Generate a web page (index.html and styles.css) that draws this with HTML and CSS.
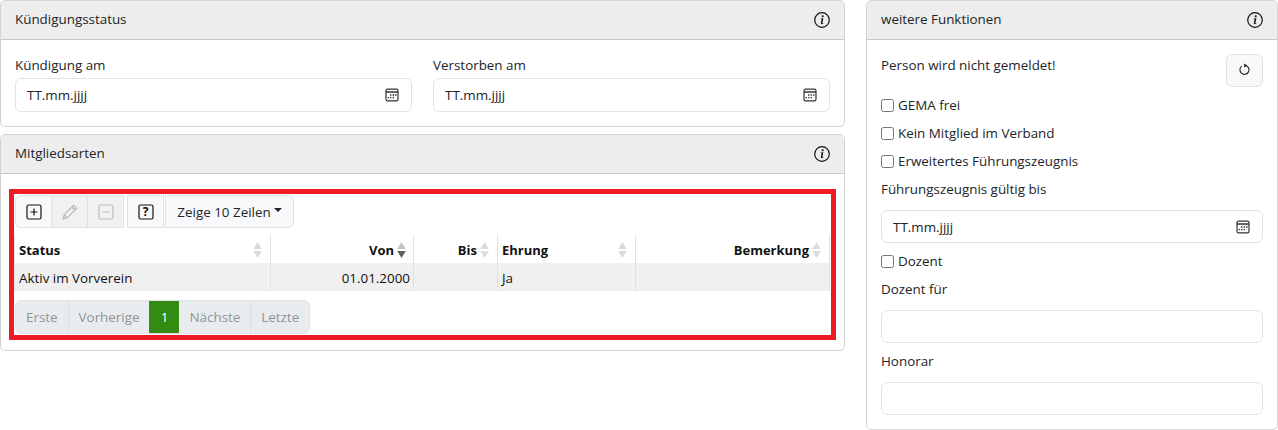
FILE: index.html
```html
<!DOCTYPE html>
<html lang="de">
<head>
<meta charset="utf-8">
<title>Mitglied</title>
<link rel="stylesheet" href="styles.css">
</head>
<body>
<svg class="defs" width="0" height="0" aria-hidden="true">
  <symbol id="info" viewBox="0 0 16 16"><circle cx="8" cy="8" r="7.3" fill="none" stroke="currentColor" stroke-width="1.2"/><path d="M9.4 6.3 6.9 6.6l-.1.5.5.1c.3 0 .4.1.3.4l-.7 3.2c-.2.9.1 1.4.9 1.4.6 0 1.2-.3 1.6-.6l.1-.5c-.2.2-.6.3-.8.3-.3 0-.4-.2-.3-.5z" fill="currentColor"/><circle cx="8.7" cy="4.2" r="1.05" fill="currentColor"/></symbol>
  <symbol id="cal" viewBox="0 0 14 14"><rect x="1" y="1.2" width="12" height="11.6" rx="1.6" fill="none" stroke="currentColor" stroke-width="1.2"/><path d="M1 4h12" stroke="currentColor" stroke-width="1.6"/><path d="M5 6.3h1.4v1.4H5zM7.6 6.3H9v1.4H7.6zM10.1 6.3h1.4v1.4h-1.4zM2.6 8.9H4v1.4H2.6zM5 8.9h1.4v1.4H5zM7.6 8.9H9v1.4H7.6z" fill="currentColor"/></symbol>
  <symbol id="sort" viewBox="0 0 9 16"><path d="M4.5 0l4.3 7h-8.600z" fill="#dcdcdc"/><path d="M4.500 16L.2 9h8.600z" fill="#dcdcdc"/></symbol>
  <symbol id="sortdown" viewBox="0 0 9 16"><path d="M4.5 0l4.3 7h-8.600z" fill="#c4c4c4"/><path d="M4.500 16L.2 9h8.600z" fill="#5f5f5f"/></symbol>
</svg>
<main class="page">
  <div class="left">
    <section class="card">
      <header class="card-head"><span>Kündigungsstatus</span><svg class="info"><use href="#info"/></svg></header>
      <div class="card-body status-grid">
        <div class="field">
          <label class="label">Kündigung am</label>
          <div class="input date"><span>TT.mm.jjjj</span><svg class="cal"><use href="#cal"/></svg></div>
        </div>
        <div class="field">
          <label class="label">Verstorben am</label>
          <div class="input date"><span>TT.mm.jjjj</span><svg class="cal"><use href="#cal"/></svg></div>
        </div>
      </div>
    </section>
    <section class="card">
      <header class="card-head"><span>Mitgliedsarten</span><svg class="info"><use href="#info"/></svg></header>
      <div class="card-body types-body">
        <div class="marked">
          <div class="toolbar">
            <div class="btn-group">
              <button class="tbtn">
                <svg width="16" height="16" viewBox="0 0 16 16"><rect x="1" y="1" width="14" height="14" rx="1.5" fill="none" stroke="#111" stroke-width="1.2"/><path d="M8 4.5v7M4.5 8h7" stroke="#111" stroke-width="1.2"/></svg>
              </button>
              <button class="tbtn off">
                <svg width="16" height="16" viewBox="0 0 16 16"><path d="M11.6 1.400l3 3-9.400 9.400-4 1 1-4z M10 3l3 3 M2.200 10.800l3 3" fill="none" stroke="#b4b4b4" stroke-width="1.100"/></svg>
              </button>
              <button class="tbtn off">
                <svg width="16" height="16" viewBox="0 0 16 16"><rect x="1" y="1" width="14" height="14" rx="1.5" fill="none" stroke="#bdbdbd" stroke-width="1.2"/><path d="M4.5 8h7" stroke="#bdbdbd" stroke-width="1.2"/></svg>
              </button>
            </div>
            <button class="tbtn solo">
              <svg width="16" height="16" viewBox="0 0 16 16"><rect x="1" y="1" width="14" height="14" rx="1.5" fill="none" stroke="#111" stroke-width="1.2"/></svg>
              <span class="q">?</span>
            </button>
            <button class="tbtn rows">Zeige 10 Zeilen<i class="caret"></i></button>
          </div>
          <table class="grid">
            <colgroup><col class="c1"><col class="c2"><col class="c3"><col class="c4"><col class="c5"></colgroup>
            <thead>
              <tr>
                <th><div class="th"><span>Status</span><svg class="sort"><use href="#sort"/></svg></div></th>
                <th class="r"><div class="th tight"><span>Von</span><svg class="sort"><use href="#sortdown"/></svg></div></th>
                <th class="r"><div class="th"><span>Bis</span><svg class="sort"><use href="#sort"/></svg></div></th>
                <th><div class="th"><span>Ehrung</span><svg class="sort"><use href="#sort"/></svg></div></th>
                <th class="r"><div class="th"><span>Bemerkung</span><svg class="sort"><use href="#sort"/></svg></div></th>
              </tr>
            </thead>
            <tbody>
              <tr><td>Aktiv im Vorverein</td><td class="r">01.01.2000</td><td class="r"></td><td>Ja</td><td class="r"></td></tr>
            </tbody>
          </table>
          <nav class="pager">
            <span class="pg">Erste</span><span class="pg">Vorherige</span><span class="pg on">1</span><span class="pg">Nächste</span><span class="pg">Letzte</span>
          </nav>
        </div>
      </div>
    </section>
  </div>
  <aside class="right">
    <section class="card full">
      <header class="card-head"><span>weitere Funktionen</span><svg class="info"><use href="#info"/></svg></header>
      <div class="card-body side">
        <div class="notice">
          <span>Person wird nicht gemeldet!</span>
          <button class="refresh">
            <svg width="13" height="13" viewBox="0 0 14 14"><path d="M8.600 2.700A4.900 4.900 0 1 1 4 3.400" fill="none" stroke="#222" stroke-width="1.200"/><path d="M6.600 0.600v4.200L10 2.700z" fill="#222"/></svg>
          </button>
        </div>
        <label class="check"><input type="checkbox">GEMA frei</label>
        <label class="check"><input type="checkbox">Kein Mitglied im Verband</label>
        <label class="check"><input type="checkbox">Erweitertes Führungszeugnis</label>
        <label class="label tall">Führungszeugnis gültig bis</label>
        <div class="input date slim"><span>TT.mm.jjjj</span><svg class="cal"><use href="#cal"/></svg></div>
        <label class="check after">
          <input type="checkbox">Dozent</label>
        <label class="label tall">Dozent für</label>
        <div class="input slim"></div>
        <label class="label tall gap">Honorar</label>
        <div class="input slim"></div>
      </div>
    </section>
  </aside>
</main>
</body>
</html>
```
FILE: styles.css
```css
* { box-sizing: border-box; }
html, body { margin: 0; padding: 0; background: #fff; }
body {
  font-family: "Open Sans", "Noto Sans", "Liberation Sans", sans-serif;
  font-size: 13.4px;
  color: #212529;
  height: 430px;
  overflow: hidden;
}
.defs { position: absolute; }
.page { display: flex; gap: 21px; align-items: flex-start; }
.left { width: 845px; display: flex; flex-direction: column; gap: 7px; }
.right { width: 412px; height: 430px; }
.card { border: 1px solid #d4d4d4; border-radius: 5px; background: #fff; overflow: hidden; }
.card.full { height: 430px; }
.card-head {
  height: 39px;
  background: #ededed;
  border-bottom: 1px solid #c9c9c9;
  display: flex;
  justify-content: space-between;
  align-items: center;
  padding: 0 14px;
}
.card-head span { margin-bottom: 2px; }
.info { width: 16px; height: 16px; color: #111; }
.card-body { padding: 14px; }
.status-grid { display: flex; gap: 21px; height: 86px; padding-top: 14px; }
.field { flex: 1; display: flex; flex-direction: column; }
.label { display: block; height: 24px; line-height: 22px; }
.input {
  height: 34px;
  border: 1px solid #dfe2e6;
  border-radius: 6px;
  background: #fff;
  padding: 0 11px;
}
.input.slim { height: 33px; }
.date { display: flex; justify-content: space-between; align-items: center; }
.cal { width: 14px; height: 14px; color: #333; margin-right: 1px; }
.types-body { padding: 15px 8px 9px; height: 176px; }
.marked {
  border: 5px solid #ed1c24;
  height: 151px;
  padding-top: 1px;
  padding-left: 1px;
}
.toolbar { display: flex; gap: 3px; height: 33px; }
.btn-group { display: flex; }
.tbtn {
  font: inherit;
  color: #212529;
  height: 33px;
  background: #f8f9fa;
  border: 1px solid #dee2e6;
  padding: 0;
  display: flex;
  align-items: center;
  justify-content: center;
  position: relative;
}
.btn-group .tbtn { width: 37px; margin-left: -1px; }
.btn-group .tbtn:first-child { margin-left: 0; border-radius: 6px 0 0 6px; }
.btn-group .tbtn.off { background: #f1f1f1; }
.solo { width: 37px; }
.rows { width: 129px; margin-left: -2px; border-radius: 0 6px 6px 0; }
.q { position: absolute; inset: 0; display: flex; align-items: center; justify-content: center; font-weight: 700; font-size: 12px; color: #111; }
.caret {
  display: inline-block;
  margin-left: 3px;
  margin-top: -3px;
  border-top: 4px solid #212529;
  border-left: 4px solid transparent;
  border-right: 4px solid transparent;
}
.grid {
  margin: 7px 0 0 -1px;
  table-layout: fixed;
  width: 815px;
  border-collapse: collapse;
  color: #111;
}
.c1 { width: 256px; }
.c2 { width: 143px; }
.c3 { width: 84px; }
.c4 { width: 138px; }
.c5 { width: 194px; }
.grid th, .grid td { padding: 1px 4px 0; border-right: 1px solid #e2e2e2; text-align: left; }
.grid th:first-child, .grid td:first-child { border-left: 1px solid #e2e2e2; }
.grid th { height: 28px; font-weight: 700; font-size: 13px; }
.grid td { height: 28px; background: #f0f0f0; }
.grid .r { text-align: right; }
.grid td.r { padding-right: 3px; }
.th { display: flex; align-items: center; justify-content: space-between; }
.r .th { justify-content: flex-end; gap: 3px; }
.sort { width: 9px; height: 16px; margin-right: 4px; flex: none; }
.tight .sort { margin-right: 3px; }
.pager { display: inline-flex; margin-top: 9px; height: 34px; border-radius: 6px; overflow: hidden; background: #e9ecef; border: 1px solid #e0e3e6; color: #8f9499; }
.pg { display: flex; align-items: center; justify-content: center; height: 100%; padding: 0 10px; border-left: 1px solid #dcdfe2; }
.pg:first-child { border-left: 0; }
.pg.on { background: #338b11; color: #fff; border-left: 0; width: 30px; }
.pg.on + .pg { border-left: 0; }
.side { padding: 14px; }
.notice { display: flex; justify-content: space-between; align-items: flex-start; height: 37px; }
.notice span { line-height: 22px; }
.refresh {
  width: 37px;
  height: 33px;
  background: #f8f9fa;
  border: 1px solid #dee2e6;
  border-radius: 6px;
  display: flex;
  align-items: center;
  justify-content: center;
  padding: 0 0 2px;
}
.check { display: flex; align-items: center; height: 28px; gap: 4px; }
.check.after { margin-top: 4px; }
.check input { width: 13px; height: 13px; margin: 0; }
.tall { height: 28px; line-height: 28px; margin-bottom: 7px; }
.tall.gap { margin-top: 4px; }
```
